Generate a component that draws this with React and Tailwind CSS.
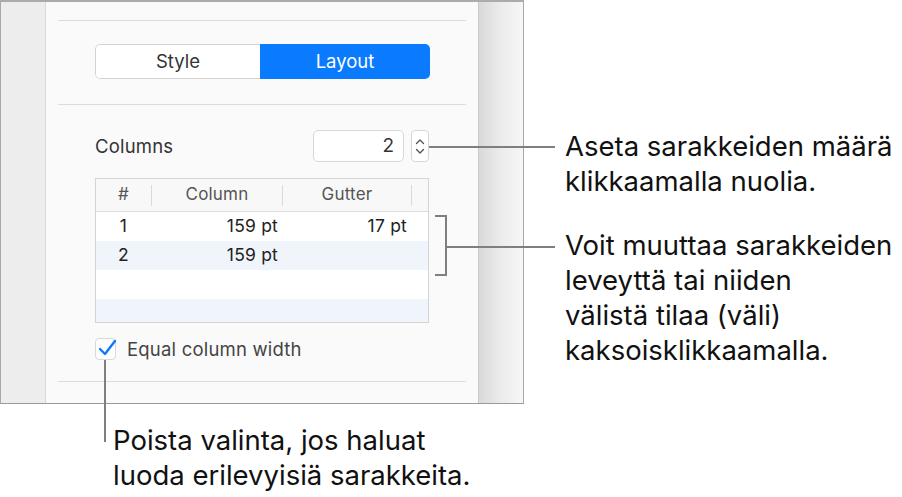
import React from 'react';

const font = { fontFamily: 'Inter, "Noto Sans", sans-serif' };

function Separator() {
  return <div className="mx-3 h-px bg-[#dcdcdc]" />;
}

function Stepper() {
  return (
    <div className="flex h-8 w-[18px] flex-col items-center justify-center gap-[3px] rounded border border-[#d6d6d6] bg-white">
      <svg width="10" height="7" viewBox="0 0 10 7" fill="none">
        <path d="M1.5 5.5L5 2L8.5 5.5" stroke="#555" strokeWidth="1.4" strokeLinecap="round" strokeLinejoin="round" />
      </svg>
      <svg width="10" height="7" viewBox="0 0 10 7" fill="none">
        <path d="M1.5 1.5L5 5L8.5 1.5" stroke="#555" strokeWidth="1.4" strokeLinecap="round" strokeLinejoin="round" />
      </svg>
    </div>
  );
}

function Row({ n, col, gut, shade }) {
  return (
    <div className={`flex h-[29px] items-center text-[17.5px] tracking-[0.2px] text-[#222] ${shade ? 'bg-[#f0f4fb]' : 'bg-white'}`}>
      <div className="w-[55px] text-center">{n}</div>
      <div className="w-[131px] pr-1 text-right">{col}</div>
      <div className="w-[129px] pr-1 text-right">{gut}</div>
    </div>
  );
}

function Panel() {
  return (
    <div className="flex h-[404px] w-[524px] border-t-2 border-b border-l border-r border-[#a9a9a9] border-t-[#ababab] border-b-[#9a9a9a]">
      <div className="w-[45px] border-r border-[#dadada] bg-[#ededed]" />
      <div className="flex w-[432px] flex-col bg-[#fafafa] pt-[18px]">
        <Separator />
        <div className="ml-[49px] mt-[23px] flex h-[35px] w-[335px] overflow-hidden rounded-[5px] text-[18.5px]">
          <div className="flex w-[165px] items-center justify-center rounded-l-[5px] border border-r-0 border-[#d3d3d3] bg-white text-[#333]">Style</div>
          <div className="flex flex-1 items-center justify-center bg-[#0a7aff] text-white">Layout</div>
        </div>
        <div className="mt-[25px]"><Separator /></div>
        <div className="ml-[49px] mt-[25px] flex h-8 w-[334px] items-center">
          <div className="flex-1 text-[18.5px] leading-none tracking-[0.2px] text-[#333]">Columns</div>
          <div className="flex h-8 w-[91px] items-center justify-end rounded-[5px] border border-[#d8d8d8] bg-white pr-[9px] text-[19px] text-[#333]">2</div>
          <div className="ml-[7px]"><Stepper /></div>
        </div>
        <div className="ml-[49px] mt-[16px] w-[334px] border border-[#d4d4d4] bg-white">
          <div className="flex h-[33px] items-center border-b border-[#dcdcdc] bg-[#f8f8f8] text-[17px] tracking-[0.2px] text-[#555]">
            <div className="w-[55px] text-center">#</div>
            <div className="h-[21px] w-px bg-[#dadada]" />
            <div className="w-[130px] text-center">Column</div>
            <div className="h-[21px] w-px bg-[#dadada]" />
            <div className="w-[128px] text-center">Gutter</div>
            <div className="h-[21px] w-px bg-[#dadada]" />
          </div>
          <Row n="1" col="159 pt" gut="17 pt" />
          <Row n="2" col="159 pt" gut="" shade />
          <Row n="" col="" gut="" />
          <div className="h-[23px] bg-[#f0f4fb]" />
        </div>
        <div className="ml-[49px] mt-[15px] flex h-[22px] items-center">
          <div className="relative h-[22px] w-[21px] rounded-[4px] border border-[#d8d8d8] bg-white">
            <svg className="absolute left-[1px] top-0" width="20" height="18" viewBox="0 0 20 18" fill="none">
              <path d="M3 10L8 15L18 2" stroke="#0a7aff" strokeWidth="2.4" strokeLinecap="round" strokeLinejoin="round" />
            </svg>
          </div>
          <span className="ml-[11px] text-[18.5px] leading-none tracking-[0.2px] text-[#444]">Equal column width</span>
        </div>
        <div className="mt-[21px]"><Separator /></div>
      </div>
      <div className="flex-1 border-l border-[#c8c8c8] bg-gradient-to-r from-[#d9d9d9] via-[#ececec] to-[#f6f6f6]" />
    </div>
  );
}

export default function App() {
  return (
    <div className="relative h-[497px] w-[902px] overflow-hidden bg-white" style={font}>
      <Panel />

      {/* callout: stepper */}
      <div className="absolute left-[429px] top-[146px] h-[2px] w-[126px] bg-[#7f7f7f]" />
      <div className="absolute left-[565px] top-[129px] whitespace-nowrap text-[27.5px] leading-[35px] text-[#111]">
        Aseta sarakkeiden määrä<br />klikkaamalla nuolia.
      </div>

      {/* callout: table bracket */}
      <div className="absolute left-[435px] top-[215px] h-[61px] w-[12px] border-t-2 border-r-2 border-b-2 border-[#7f7f7f]" />
      <div className="absolute left-[447px] top-[246px] h-[2px] w-[108px] bg-[#7f7f7f]" />
      <div className="absolute left-[565px] top-[228px] whitespace-nowrap text-[27.5px] leading-[35px] text-[#111]">
        Voit muuttaa sarakkeiden<br />leveyttä tai niiden<br />välistä tilaa (väli)<br />kaksoisklikkaamalla.
      </div>

      {/* callout: checkbox */}
      <div className="absolute left-[104px] top-[360px] h-[82px] w-[2px] bg-[#7f7f7f]" />
      <div className="absolute left-[113px] top-[423px] whitespace-nowrap text-[27.5px] leading-[35px] text-[#111]">
        Poista valinta, jos haluat<br />luoda erilevyisiä sarakkeita.
      </div>
    </div>
  );
}
